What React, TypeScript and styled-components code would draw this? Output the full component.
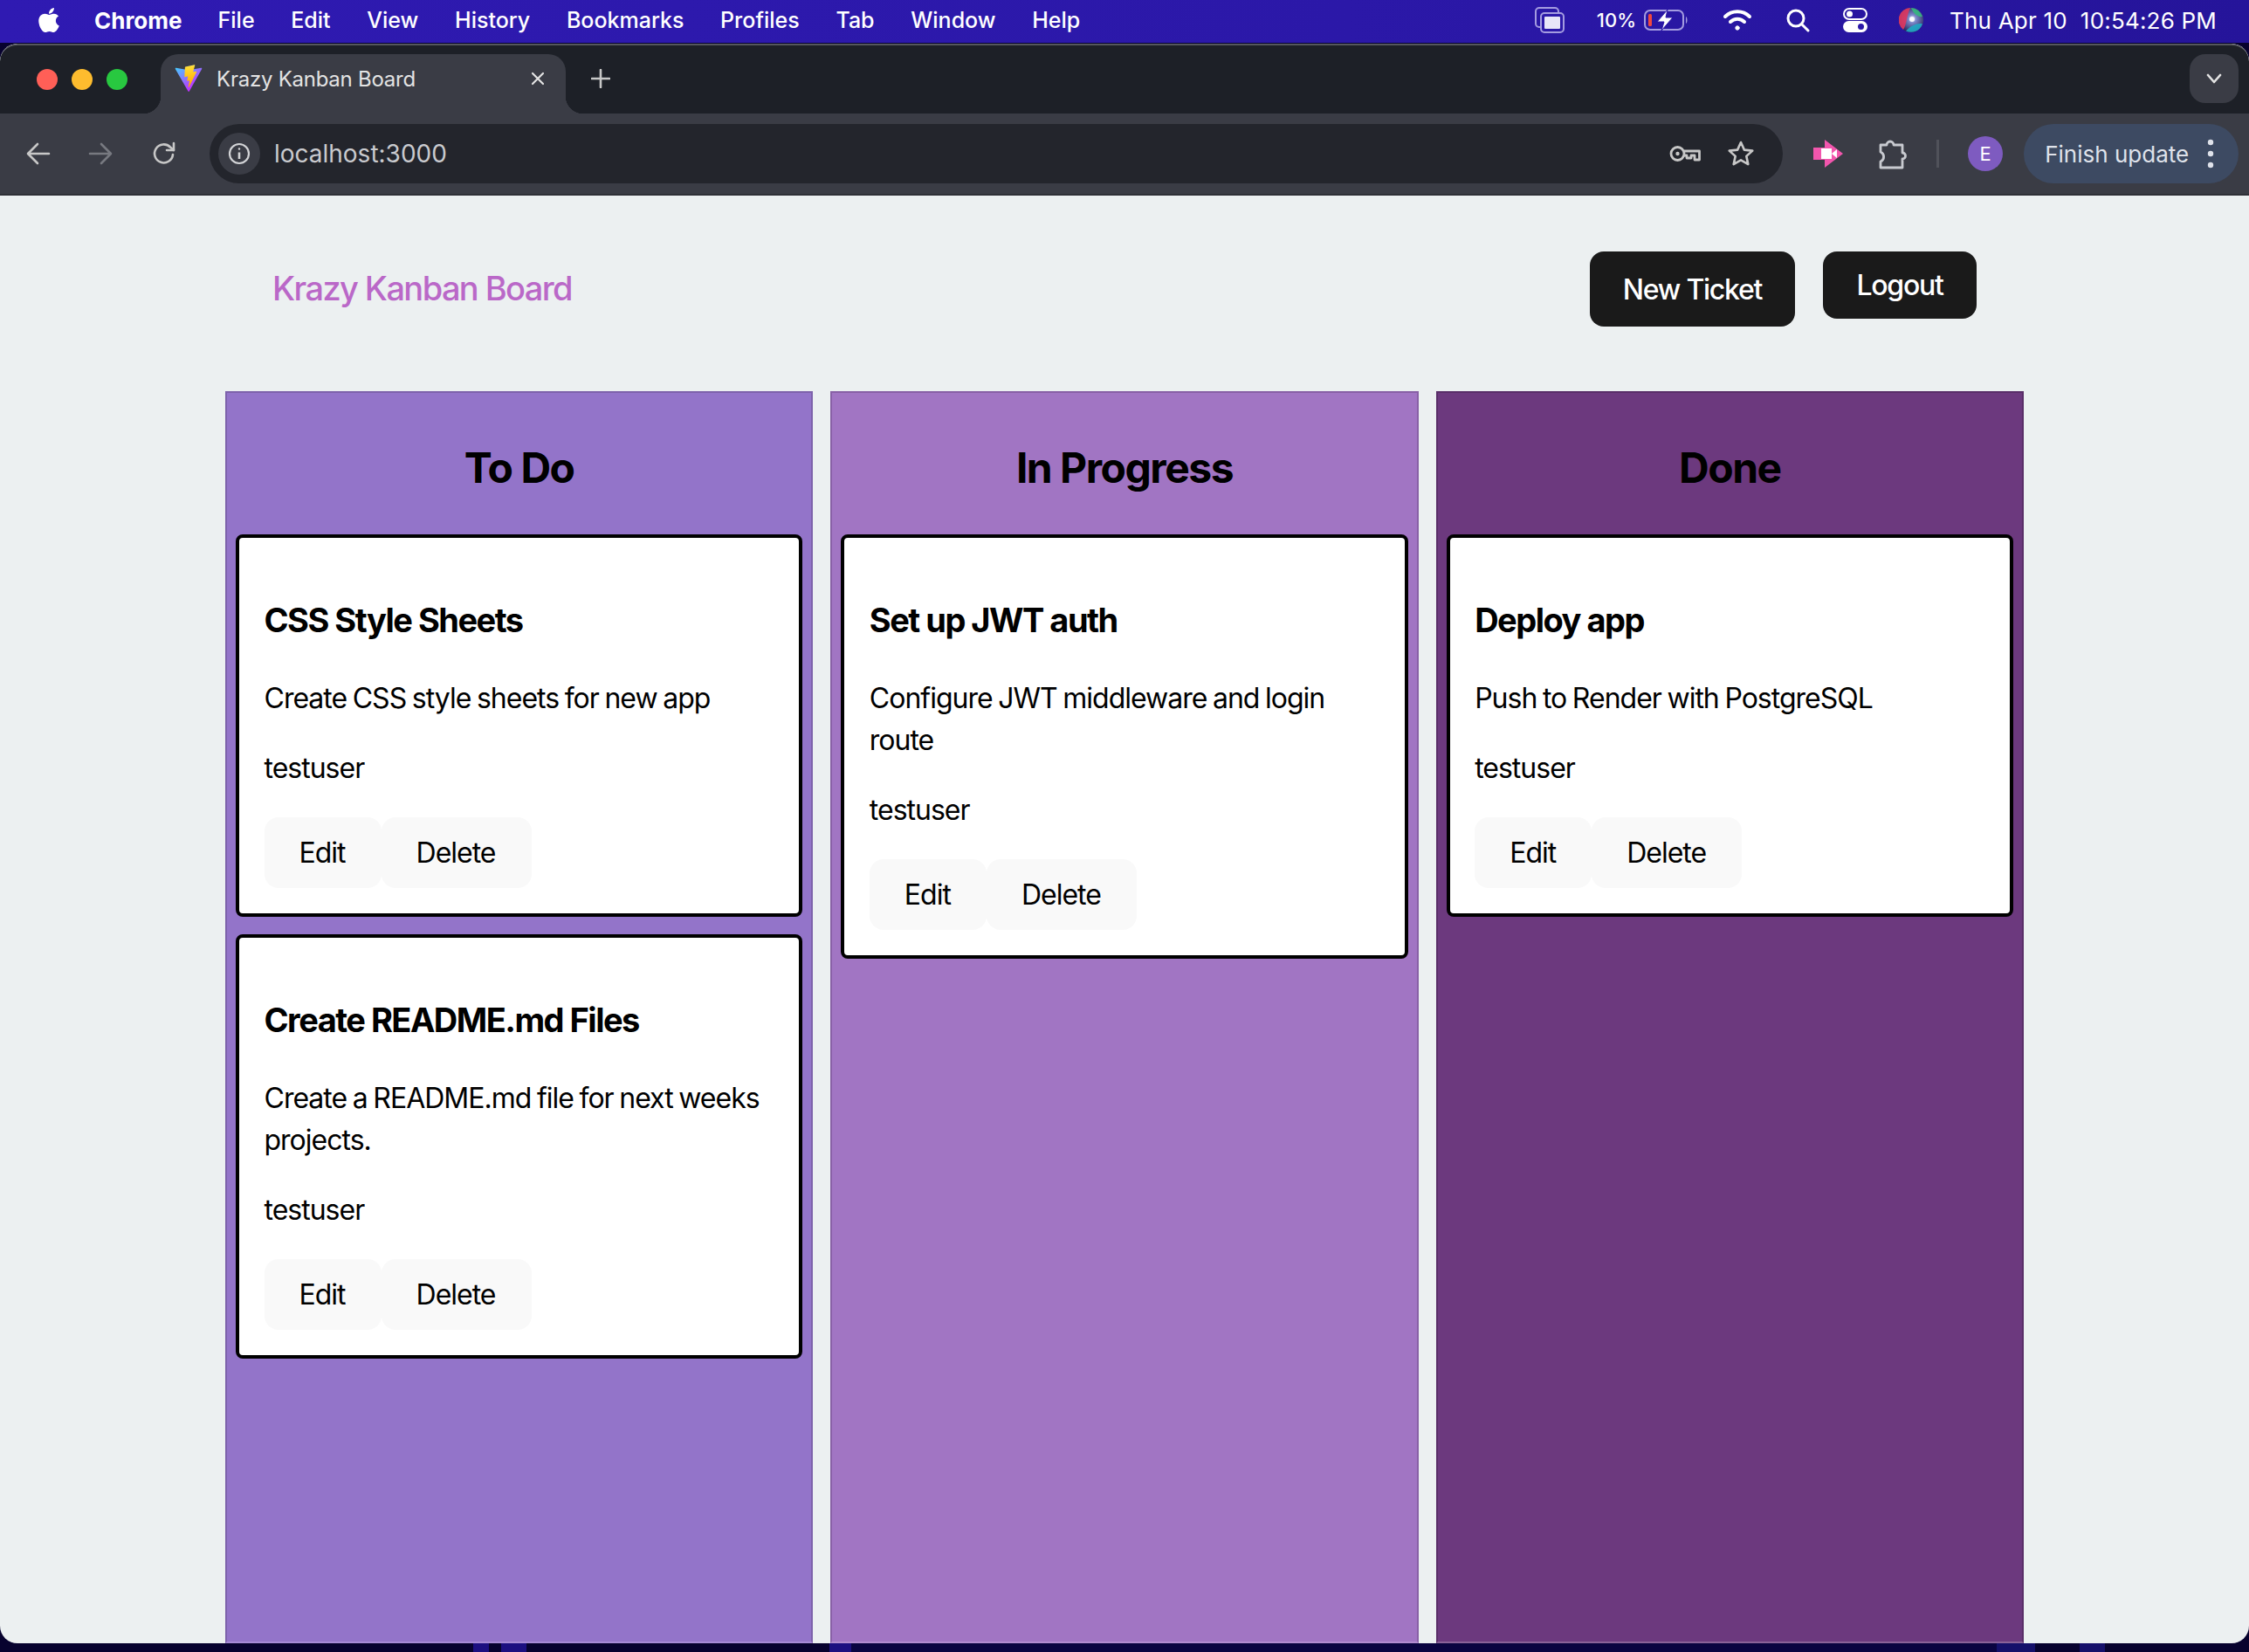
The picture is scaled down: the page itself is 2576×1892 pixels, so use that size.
import React from "react";
import styled, { createGlobalStyle } from "styled-components";
import { FaApple } from "react-icons/fa";

const GlobalStyle = createGlobalStyle`
  html, body {
    margin: 0;
    padding: 0;
    background: #07022e;
  }
  * {
    box-sizing: border-box;
  }
`;

type Ticket = { title: string; description: string; user: string };
type Lane = { name: string; color: string; edge: string; foot: string; tickets: Ticket[] };

const lanes: Lane[] = [
  {
    name: "To Do",
    color: "#9374c9",
    edge: "#7d62ab",
    foot: "#a78bd6",
    tickets: [
      { title: "CSS Style Sheets", description: "Create CSS style sheets for new app", user: "testuser" },
      { title: "Create README.md Files", description: "Create a README.md file for next weeks projects.", user: "testuser" },
    ],
  },
  {
    name: "In Progress",
    color: "#a175c3",
    edge: "#8860a6",
    foot: "#b28ccf",
    tickets: [
      { title: "Set up JWT auth", description: "Configure JWT middleware and login route", user: "testuser" },
    ],
  },
  {
    name: "Done",
    color: "#6c397e",
    edge: "#592e68",
    foot: "#8a6298",
    tickets: [
      { title: "Deploy app", description: "Push to Render with PostgreSQL", user: "testuser" },
    ],
  },
];

const menus = ["File", "Edit", "View", "History", "Bookmarks", "Profiles", "Tab", "Window", "Help"];

const Desktop = styled.div`
  width: 2576px;
  height: 1892px;
  overflow: hidden;
  background: #07022e;
  font-family: Inter, "Liberation Sans", sans-serif;
`;

const MenuBar = styled.header`
  height: 49px;
  padding: 0 37px 3px 40px;
  display: flex;
  align-items: center;
  color: #fff;
  font-size: 25px;
  font-weight: 500;
  background: linear-gradient(90deg, #2f1ab2, #2b18a8 60%, #25149a);
`;

const AppleSlot = styled.span`
  width: 68px;
  display: flex;
  font-size: 32px;
`;

const AppName = styled.span`
  font-size: 26px;
  font-weight: 700;
  margin-right: 41px;
`;

const MenuItem = styled.span`
  margin-right: 41.7px;
`;

const TrayItem = styled.span<{ $ml: number }>`
  margin-left: ${(p) => p.$ml}px;
  display: flex;
  align-items: center;
  font-size: 22px;
`;

const Clock = styled.span`
  margin-left: 30px;
  font-size: 26px;
  font-weight: 400;
  letter-spacing: 0.2px;
  white-space: pre;
`;

const TraySpacer = styled.span`
  flex: 1;
`;

const Browser = styled.div`
  height: 1832px;
  margin-top: 1px;
  display: flex;
  flex-direction: column;
  overflow: hidden;
  border-radius: 20px;
  background: #ecf0f1;
`;

const Wallpaper = styled.div`
  height: 10px;
  background: linear-gradient(
    90deg,
    #07022e 542px,
    #1c0f80 542px 560px,
    #07022e 560px 574px,
    #1c0f80 574px 603px,
    #07022e 603px 950px,
    #1c0f80 950px 975px,
    #0a0440 975px 2287px,
    #15106a 2287px 2331px,
    #07022e 2331px 2382px,
    #15106a 2382px 2411px,
    #07022e 2411px
  );
`;

const TabStrip = styled.div`
  height: 80px;
  flex: none;
  padding: 0 12px 0 42px;
  display: flex;
  align-items: flex-end;
  background: #1d2027;
  border-top: 2px solid #55575c;
  border-radius: 20px 20px 0 0;
`;

const Lights = styled.div`
  height: 78px;
  margin-right: 38px;
  display: flex;
  align-items: center;
  gap: 16px;
`;

const Light = styled.span<{ $color: string }>`
  width: 24px;
  height: 24px;
  border-radius: 50%;
  background: ${(p) => p.$color};
`;

const Tab = styled.div`
  position: relative;
  width: 464px;
  height: 68px;
  padding: 0 24px 12px 16px;
  display: flex;
  align-items: center;
  color: #e3e3e3;
  font-size: 24px;
  letter-spacing: -0.25px;
  background: #3a3c45;
  border-radius: 20px 20px 0 0;

  &::before,
  &::after {
    content: "";
    position: absolute;
    bottom: 0;
    width: 20px;
    height: 20px;
    background: radial-gradient(circle at var(--cx) 0, #1d2027 20px, #3a3c45 20.5px);
  }
  &::before {
    --cx: 0;
    left: -20px;
  }
  &::after {
    --cx: 100%;
    right: -20px;
  }
`;

const TabTitle = styled.span`
  margin-left: 16px;
  flex: 1;
`;

const NewTab = styled.div`
  height: 78px;
  margin-left: 29px;
  padding-bottom: 2px;
  display: flex;
  align-items: center;
`;

const TabSearch = styled.div`
  width: 56px;
  height: 56px;
  margin: 0 0 12px auto;
  display: flex;
  align-items: center;
  justify-content: center;
  background: #3a3c45;
  border-radius: 18px;
`;

const Toolbar = styled.div`
  height: 94px;
  flex: none;
  padding: 12px 12px 12px 24px;
  display: flex;
  align-items: center;
  background: #3a3c45;
  border-bottom: 2px solid #2e3037;
`;

const NavSlot = styled.div<{ $mr: number }>`
  width: 40px;
  height: 40px;
  margin-right: ${(p) => p.$mr}px;
  display: flex;
  align-items: center;
  justify-content: center;
`;

const Omnibox = styled.div`
  width: 1804px;
  height: 68px;
  padding: 0 32px 0 10px;
  display: flex;
  align-items: center;
  background: #23252c;
  border-radius: 34px;
`;

const InfoChip = styled.div`
  width: 48px;
  height: 48px;
  display: flex;
  align-items: center;
  justify-content: center;
  background: #3a3c45;
  border-radius: 50%;
`;

const Url = styled.span`
  margin-left: 16px;
  flex: 1;
  color: #c9cace;
  font-size: 28px;
`;

const OmniIcon = styled.span<{ $ml: number }>`
  margin-left: ${(p) => p.$ml}px;
  display: flex;
`;

const Separator = styled.span`
  width: 3px;
  height: 32px;
  margin-left: 34px;
  background: #50525a;
`;

const Avatar = styled.span`
  width: 40px;
  height: 40px;
  margin-left: 33px;
  display: flex;
  align-items: center;
  justify-content: center;
  color: #fff;
  font-size: 22px;
  background: #7e5bc0;
  border-radius: 50%;
`;

const FinishUpdate = styled.div`
  width: 246px;
  height: 68px;
  margin-left: 24px;
  padding: 0 28px 0 24px;
  display: flex;
  align-items: center;
  justify-content: space-between;
  color: #dfe2ea;
  font-size: 26px;
  white-space: nowrap;
  background: #3d4a62;
  border-radius: 34px;
`;

const Page = styled.main`
  flex: 1;
  min-height: 0;
  overflow: hidden;
`;

const PageHeader = styled.div`
  padding: 64px 312px 0;
  margin-bottom: 74px;
  display: flex;
  align-items: center;
  justify-content: space-between;
`;

const Brand = styled.h2`
  margin: 0 0 2px;
  color: #ba68c8;
  font-size: 38px;
  font-weight: 500;
  line-height: 52px;
  letter-spacing: -1.6px;
`;

const HeaderNav = styled.nav`
  display: flex;
  align-items: flex-start;
  gap: 32px;
`;

const DarkButton = styled.button<{ $h: number; $w: number }>`
  width: ${(p) => p.$w}px;
  height: ${(p) => p.$h}px;
  padding: 0;
  color: #fff;
  font-family: inherit;
  font-size: 32px;
  font-weight: 500;
  letter-spacing: -1.25px;
  background: #1a1a1a;
  border: none;
  border-radius: 16px;
`;

const Board = styled.div`
  width: 2060px;
  height: 1500px;
  margin: 0 auto;
  display: grid;
  grid-template-columns: repeat(3, 1fr);
  gap: 20px;
`;

const Column = styled.section<{ $color: string; $edge: string; $foot: string }>`
  height: 1434px;
  padding: 57px 10px 0;
  background: ${(p) => p.$color};
  border: 2px solid ${(p) => p.$edge};
  border-bottom: 2px solid ${(p) => p.$foot};
`;

const ColumnTitle = styled.h2`
  margin: 0 0 47px;
  color: #000;
  font-size: 48px;
  font-weight: 700;
  line-height: 58px;
  letter-spacing: -1.5px;
  text-align: center;
`;

const CardStack = styled.div`
  display: flex;
  flex-direction: column;
  gap: 20px;
`;

const Card = styled.article`
  padding: 68px 28px 29px 28.5px;
  color: #000;
  background: #fff;
  border: 4px solid #000;
  border-radius: 8px;
`;

const CardTitle = styled.h3`
  margin: 0 0 40px;
  font-size: 38px;
  font-weight: 700;
  line-height: 52px;
  letter-spacing: -1.5px;
`;

const CardText = styled.p`
  margin: 0 0 32px;
  font-size: 32px;
  line-height: 48px;
  letter-spacing: -1px;
  word-spacing: -1.4px;
`;

const CardActions = styled.div`
  display: flex;
`;

const CardButton = styled.button`
  height: 81px;
  padding: 0 41px 0 40px;
  color: #000;
  font-family: inherit;
  font-size: 32px;
  font-weight: 400;
  letter-spacing: -1px;
  background: #f9f9f9;
  border: none;
  border-radius: 16px;
`;

const ViteLogo = () => (
  <svg width="32" height="32" viewBox="0 0 410 404" fill="none">
    <defs>
      <linearGradient id="viteA" x1="6" y1="33" x2="235" y2="344" gradientUnits="userSpaceOnUse">
        <stop stopColor="#41D1FF" />
        <stop offset="1" stopColor="#BD34FE" />
      </linearGradient>
      <linearGradient id="viteB" x1="194" y1="8.8" x2="236" y2="293" gradientUnits="userSpaceOnUse">
        <stop stopColor="#FFEA83" />
        <stop offset="0.08" stopColor="#FFDD35" />
        <stop offset="1" stopColor="#FFA800" />
      </linearGradient>
    </defs>
    <path
      d="M399.641 59.5246L215.643 388.545C211.844 395.338 202.084 395.378 198.228 388.618L10.5817 59.5563C6.38087 52.1896 12.6802 43.2665 21.0281 44.7586L205.223 77.6824C206.398 77.8924 207.601 77.8904 208.776 77.6763L389.119 44.8058C397.439 43.2894 403.768 52.1434 399.641 59.5246Z"
      fill="url(#viteA)"
    />
    <path
      d="M292.965 1.5744L156.801 28.2552C154.563 28.6937 152.906 30.5903 152.771 32.8664L144.395 174.33C144.198 177.662 147.258 180.248 150.51 179.498L188.42 170.749C191.967 169.931 195.172 173.055 194.443 176.622L183.18 231.775C182.422 235.487 185.907 238.661 189.532 237.56L212.947 230.446C216.577 229.344 220.065 232.527 219.297 236.242L201.398 322.875C200.278 328.294 207.486 331.249 210.492 326.603L212.5 323.5L323.454 102.072C325.312 98.3645 322.108 94.137 318.036 94.9228L279.014 102.454C275.347 103.161 272.227 99.746 273.262 96.1583L298.731 7.86689C299.767 4.27314 296.636 0.855181 292.965 1.5744Z"
      fill="url(#viteB)"
    />
  </svg>
);

const ScreenMirror = () => (
  <svg width="36" height="32" viewBox="0 0 36 32" fill="none">
    <rect x="2" y="2" width="26" height="22" rx="4" stroke="#a49ce0" strokeWidth="2" />
    <rect x="8" y="8" width="26" height="22" rx="4" fill="#2b18a8" stroke="#a49ce0" strokeWidth="2" />
    <rect x="12" y="12" width="18" height="14" rx="1" fill="#e8e6f8" />
  </svg>
);

const Battery = () => (
  <svg width="51" height="24" viewBox="0 0 51 24" fill="none">
    <rect x="1" y="1" width="44" height="22" rx="6" stroke="#a49ce0" strokeWidth="2" />
    <rect x="5" y="5" width="4" height="14" rx="1.5" fill="#f0483e" />
    <path d="M48 8c2 1 2 7 0 8z" fill="#a49ce0" />
    <path d="M27 0L15 14h8l-3 10 13-15h-8z" fill="#fff" stroke="#2b18a8" strokeWidth="1" />
  </svg>
);

const Wifi = () => (
  <svg width="34" height="26" viewBox="0 0 34 26" fill="none" stroke="#fff" strokeWidth="4" strokeLinecap="round">
    <path d="M3 9a20 20 0 0 1 28 0" />
    <path d="M9 15a11.5 11.5 0 0 1 16 0" />
    <circle cx="17" cy="22" r="2.2" fill="#fff" strokeWidth="1" />
  </svg>
);

const Search = () => (
  <svg width="28" height="28" viewBox="0 0 28 28" fill="none" stroke="#fff" strokeWidth="3" strokeLinecap="round">
    <circle cx="12" cy="12" r="9" />
    <path d="M19 19l7 7" />
  </svg>
);

const ControlCenter = () => (
  <svg width="28" height="28" viewBox="0 0 28 28" fill="none">
    <rect x="1" y="1" width="26" height="12" rx="6" stroke="#fff" strokeWidth="2" />
    <circle cx="7.5" cy="7" r="3.5" fill="#fff" />
    <rect x="0" y="15" width="28" height="13" rx="6.5" fill="#fff" />
    <circle cx="20.5" cy="21.5" r="3.5" fill="#2b18a8" />
  </svg>
);

const Siri = () => (
  <svg width="28" height="28" viewBox="0 0 28 28">
    <defs>
      <radialGradient id="siriCore" cx="55%" cy="45%" r="55%">
        <stop offset="0" stopColor="#f4f8ff" />
        <stop offset="0.3" stopColor="#7a86c8" />
        <stop offset="1" stopColor="#2c2a5e" />
      </radialGradient>
    </defs>
    <circle cx="14" cy="14" r="14" fill="url(#siriCore)" />
    <path d="M13 0A14 14 0 0 0 5 25C9 19 9 8 13 0z" fill="#e0365f" opacity="0.9" />
    <path d="M14 0a14 14 0 0 1 13 10C22 11 17 7 14 0z" fill="#35b87f" opacity="0.9" />
    <path d="M8 26.5a14 14 0 0 0 19-8C22 17 14 20 8 26.5z" fill="#1fa9c4" opacity="0.9" />
    <circle cx="15" cy="13" r="3" fill="#fff" opacity="0.9" />
  </svg>
);

const CloseIcon = () => (
  <svg width="16" height="16" viewBox="0 0 16 16" stroke="#e3e3e3" strokeWidth="2.2" strokeLinecap="round">
    <path d="M2 2l12 12M14 2L2 14" />
  </svg>
);

const PlusIcon = () => (
  <svg width="22" height="22" viewBox="0 0 22 22" stroke="#c7c7c7" strokeWidth="2.6" strokeLinecap="round">
    <path d="M11 1v20M1 11h20" />
  </svg>
);

const ChevronIcon = () => (
  <svg width="18" height="12" viewBox="0 0 18 12" fill="none" stroke="#e3e3e3" strokeWidth="2.6" strokeLinecap="round" strokeLinejoin="round">
    <path d="M2 2l7 8 7-8" />
  </svg>
);

const ArrowIcon = ({ dir, color }: { dir: "left" | "right"; color: string }) => (
  <svg width="28" height="26" viewBox="0 0 28 26" fill="none" stroke={color} strokeWidth="2.6" strokeLinecap="round" strokeLinejoin="round">
    {dir === "left" ? <path d="M26 13H3M13 2L2 13l11 11" /> : <path d="M2 13h23M15 2l11 11-11 11" />}
  </svg>
);

const ReloadIcon = () => (
  <svg width="28" height="28" viewBox="0 0 28 28" fill="none" stroke="#c7c7c7" strokeWidth="2.6" strokeLinecap="round" strokeLinejoin="round">
    <path d="M24 15a10.5 10.5 0 1 1-3-8.5L25 10" />
    <path d="M25 2v8h-8" />
  </svg>
);

const InfoIcon = () => (
  <svg width="26" height="26" viewBox="0 0 26 26" fill="none" stroke="#d2d3d6" strokeWidth="2.2">
    <circle cx="13" cy="13" r="11" />
    <path d="M13 11.5V19" strokeWidth="2.6" />
    <circle cx="13" cy="7.5" r="1.2" fill="#d2d3d6" stroke="none" />
  </svg>
);

const KeyIcon = () => (
  <svg width="36" height="22" viewBox="0 0 36 22" fill="none" stroke="#c7c7c7" strokeWidth="2.8">
    <circle cx="9.5" cy="11" r="7.5" />
    <circle cx="9.5" cy="11" r="2.2" fill="#c7c7c7" stroke="none" />
    <path d="M17 8H34.5V18H29V13H25V16H20V13H17" strokeLinejoin="round" />
  </svg>
);

const StarIcon = () => (
  <svg width="32" height="32" viewBox="0 0 32 32" fill="none" stroke="#c7c7c7" strokeWidth="2.6" strokeLinejoin="round">
    <path d="M16 3l3.9 8.6 9.4 1-7 6.3 2 9.2L16 23.4l-8.3 4.7 2-9.2-7-6.3 9.4-1z" />
  </svg>
);

const RecorderIcon = () => (
  <svg width="34" height="32" viewBox="0 0 34 32">
    <path d="M0 9h13V0l21 16-21 16v-9H0z" fill="#f256ad" />
    <rect x="9" y="10" width="12" height="12" fill="#fff" />
    <path d="M21 16l6-5v10z" fill="#fff" />
  </svg>
);

const PuzzleIcon = () => (
  <svg width="34" height="36" viewBox="0 0 34 36" fill="none" stroke="#c8cad0" strokeWidth="2.8" strokeLinejoin="round">
    <path d="M4 8h7a4 4 0 0 1 8 0h10v9a3.5 3.5 0 0 1 0 7v10H4v-7a6 6 0 0 0 0-11z" />
  </svg>
);

const DotsIcon = () => (
  <svg width="8" height="34" viewBox="0 0 8 34" fill="#dfe2ea">
    <circle cx="4" cy="4" r="3.2" />
    <circle cx="4" cy="17" r="3.2" />
    <circle cx="4" cy="30" r="3.2" />
  </svg>
);

export default function App() {
  return (
    <Desktop>
      <GlobalStyle />
      <MenuBar>
        <AppleSlot>
          <FaApple />
        </AppleSlot>
        <AppName>Chrome</AppName>
        {menus.map((m) => (
          <MenuItem key={m}>{m}</MenuItem>
        ))}
        <TraySpacer />
        <TrayItem $ml={0}><ScreenMirror /></TrayItem>
        <TrayItem $ml={36}>10%</TrayItem>
        <TrayItem $ml={9}><Battery /></TrayItem>
        <TrayItem $ml={39}><Wifi /></TrayItem>
        <TrayItem $ml={38}><Search /></TrayItem>
        <TrayItem $ml={38}><ControlCenter /></TrayItem>
        <TrayItem $ml={36}><Siri /></TrayItem>
        <Clock>Thu Apr 10  10:54:26 PM</Clock>
      </MenuBar>

      <Browser>
        <TabStrip>
          <Lights>
            <Light $color="#ff5f57" />
            <Light $color="#febc2e" />
            <Light $color="#28c840" />
          </Lights>
          <Tab>
            <ViteLogo />
            <TabTitle>Krazy Kanban Board</TabTitle>
            <CloseIcon />
          </Tab>
          <NewTab>
            <PlusIcon />
          </NewTab>
          <TabSearch>
            <ChevronIcon />
          </TabSearch>
        </TabStrip>

        <Toolbar>
          <NavSlot $mr={31}><ArrowIcon dir="left" color="#c7c7c7" /></NavSlot>
          <NavSlot $mr={33}><ArrowIcon dir="right" color="#777980" /></NavSlot>
          <NavSlot $mr={32}><ReloadIcon /></NavSlot>
          <Omnibox>
            <InfoChip><InfoIcon /></InfoChip>
            <Url>localhost:3000</Url>
            <OmniIcon $ml={0}><KeyIcon /></OmniIcon>
            <OmniIcon $ml={30}><StarIcon /></OmniIcon>
          </Omnibox>
          <OmniIcon $ml={35}><RecorderIcon /></OmniIcon>
          <OmniIcon $ml={39}><PuzzleIcon /></OmniIcon>
          <Separator />
          <Avatar>E</Avatar>
          <FinishUpdate>
            Finish update
            <DotsIcon />
          </FinishUpdate>
        </Toolbar>

        <Page>
          <PageHeader>
            <Brand>Krazy Kanban Board</Brand>
            <HeaderNav>
              <DarkButton $w={235} $h={86}>New Ticket</DarkButton>
              <DarkButton $w={176} $h={77}>Logout</DarkButton>
            </HeaderNav>
          </PageHeader>
          <Board>
            {lanes.map((lane) => (
              <Column key={lane.name} $color={lane.color} $edge={lane.edge} $foot={lane.foot}>
                <ColumnTitle>{lane.name}</ColumnTitle>
                <CardStack>
                  {lane.tickets.map((t) => (
                    <Card key={t.title}>
                      <CardTitle>{t.title}</CardTitle>
                      <CardText>{t.description}</CardText>
                      <CardText>{t.user}</CardText>
                      <CardActions>
                        <CardButton>Edit</CardButton>
                        <CardButton>Delete</CardButton>
                      </CardActions>
                    </Card>
                  ))}
                </CardStack>
              </Column>
            ))}
          </Board>
        </Page>
      </Browser>
      <Wallpaper />
    </Desktop>
  );
}
